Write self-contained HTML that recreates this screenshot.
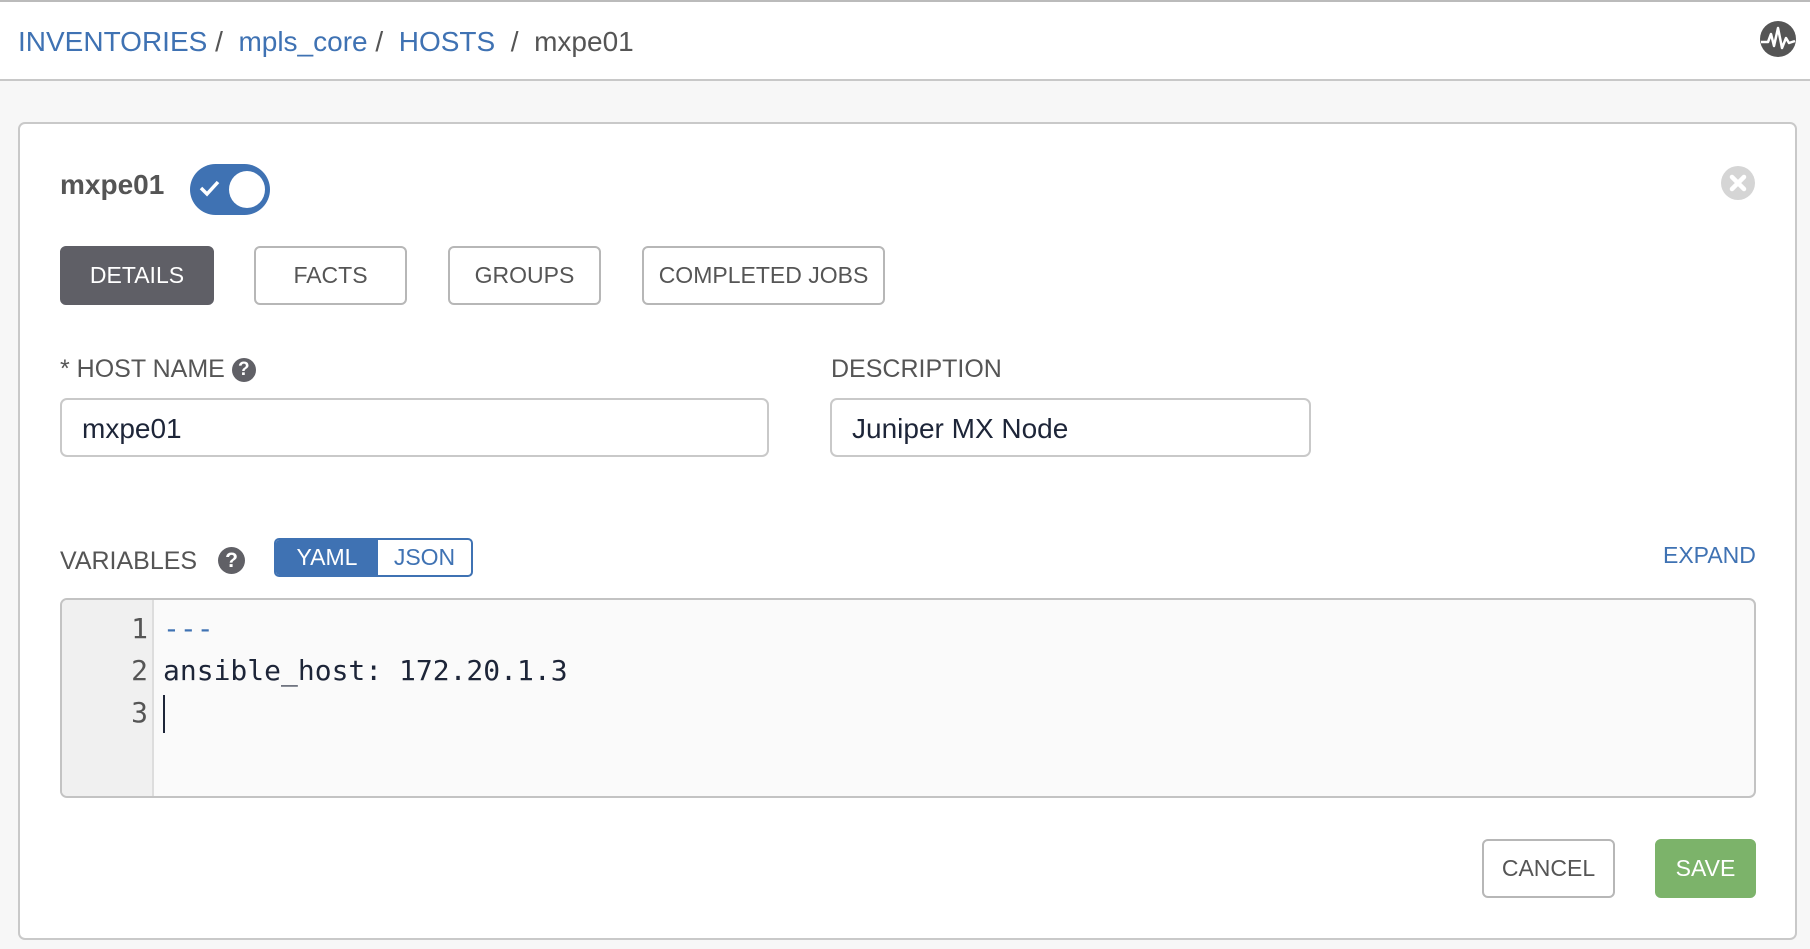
<!DOCTYPE html>
<html><head><meta charset="utf-8"><style>
*{box-sizing:border-box;margin:0;padding:0}
body{width:1810px;height:949px;background:#f7f7f7;font-family:"Liberation Sans",sans-serif;color:#606066;position:relative;overflow:hidden}
.abs{position:absolute}
.hdr{left:0;top:0;width:1810px;height:81px;background:#fff;border-top:2px solid #bbb;border-bottom:2px solid #c8c8c8}
.bc{left:18px;top:26px;font-size:28px;white-space:nowrap;color:#555}
.bc a{color:#3f72b3;text-decoration:none}
.card{left:18px;top:122px;width:1779px;height:818px;background:#fff;border:2px solid #c9c9c9;border-radius:7px}
.btn{position:absolute;height:59px;border:2px solid #b7b7b7;border-radius:6px;font-size:23px;display:flex;align-items:center;justify-content:center;color:#555;background:#fff}
.lbl{position:absolute;font-size:25px;color:#555}
.inp{position:absolute;height:59px;border:2px solid #c9c9c9;border-radius:7px;font-size:28px;color:#1d2538;padding-left:20px;display:flex;align-items:center}
.q{display:inline-block;width:24px;height:24px;border-radius:50%;background:#606066;color:#fff;font-size:19px;font-weight:bold;text-align:center;line-height:24px;vertical-align:middle}
.mono{font-family:"DejaVu Sans Mono","Liberation Mono",monospace;font-size:28px}
</style></head><body>
<div class="abs hdr"></div>
<div class="abs bc"><a>INVENTORIES</a> / &nbsp;<a>mpls_core</a> / &nbsp;<a>HOSTS</a> &nbsp;/ &nbsp;mxpe01</div>
<svg class="abs" style="left:1759px;top:20px" width="38" height="38" viewBox="0 0 38 38"><circle cx="19" cy="19" r="18" fill="#555"/><path d="M2 22 L9 22 L12 14 L15 26 L19 8 L23 28 L27 18 L30 23 L36 21" stroke="#fff" stroke-width="2.5" fill="none" stroke-linejoin="round"/></svg>
<div class="abs card"></div>
<div class="abs" style="left:60px;top:169px;font-size:28px;font-weight:bold;color:#555">mxpe01</div>
<div class="abs" style="left:190px;top:164px;width:80px;height:51px;border-radius:26px;background:#3f72b3"></div>
<div class="abs" style="left:229px;top:171px;width:36px;height:37px;border-radius:50%;background:#fff"></div>
<svg class="abs" style="left:198px;top:178px" width="24" height="20"><path d="M3 10 L9 16 L20 4" stroke="#fff" stroke-width="3.5" fill="none"/></svg>
<svg class="abs" style="left:1721px;top:166px" width="34" height="34"><circle cx="17" cy="17" r="17" fill="#d5d5d5"/><path d="M11 11 L23 23 M23 11 L11 23" stroke="#fff" stroke-width="4.5" stroke-linecap="round"/></svg>
<div class="btn" style="left:60px;top:246px;width:154px;background:#5f5f66;border-color:#5f5f66;color:#fff">DETAILS</div>
<div class="btn" style="left:254px;top:246px;width:153px">FACTS</div>
<div class="btn" style="left:448px;top:246px;width:153px">GROUPS</div>
<div class="btn" style="left:642px;top:246px;width:243px">COMPLETED JOBS</div>
<div class="lbl" style="left:60px;top:355px">* HOST NAME <span class="q">?</span></div>
<div class="lbl" style="left:831px;top:355px">DESCRIPTION</div>
<div class="inp" style="left:60px;top:398px;width:709px;padding-top:3px">mxpe01</div>
<div class="inp" style="left:830px;top:398px;width:481px;padding-top:3px">Juniper MX Node</div>
<div class="lbl" style="left:60px;top:547px">VARIABLES</div>
<span class="q abs" style="left:218px;top:547px;width:27px;height:27px;line-height:27px;font-size:21px">?</span>
<div class="abs" style="left:274px;top:538px;width:199px;height:39px;border:2px solid #3f72b3;border-radius:5px;overflow:hidden;display:flex;font-size:23px">
<div style="width:102px;background:#3f72b3;color:#fff;text-align:center;line-height:35px">YAML</div>
<div style="flex:1;color:#3f72b3;text-align:center;line-height:35px">JSON</div></div>
<div class="abs" style="left:1663px;top:542px;font-size:23px;color:#3f72b3">EXPAND</div>
<div class="abs" style="left:60px;top:598px;width:1696px;height:200px;border:2px solid #c3c3c3;border-radius:7px;background:#fafafa;overflow:hidden">
<div class="abs" style="left:0;top:0;width:92px;height:100%;background:#f0f0f0;border-right:2px solid #ddd"></div>
<div class="abs mono" style="left:0;top:8px;width:86px;text-align:right;color:#555;line-height:42px">1<br>2<br>3</div>
<div class="abs mono" style="left:101px;top:8px;color:#1d2538;line-height:42px"><span style="color:#3f72b3">---</span><br>ansible_host: 172.20.1.3<br><span style="border-left:2px solid #1d2538;display:inline-block;height:38px;vertical-align:middle"></span></div>
</div>
<div class="btn" style="left:1482px;top:839px;width:133px">CANCEL</div>
<div class="btn" style="left:1655px;top:839px;width:101px;background:#7cb36a;border-color:#7cb36a;color:#fff">SAVE</div>
</body></html>
